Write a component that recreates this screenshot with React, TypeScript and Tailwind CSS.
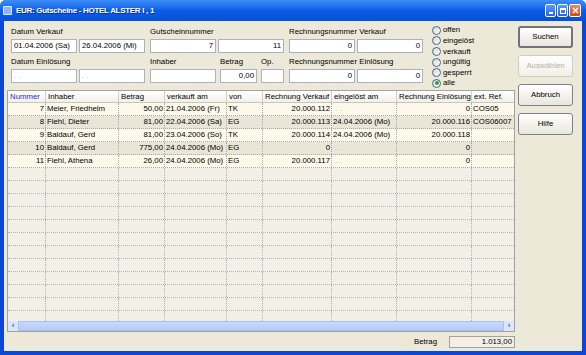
import React from "react"

type Col = { title: string; w: number; right?: boolean }

const cols: Col[] = [
  { title: "Nummer", w: 38, right: true },
  { title: "Inhaber", w: 73 },
  { title: "Betrag", w: 46, right: true },
  { title: "verkauft am", w: 62 },
  { title: "von", w: 36 },
  { title: "Rechnung Verkauf", w: 69, right: true },
  { title: "eingelöst am", w: 65 },
  { title: "Rechnung Einlösung", w: 75, right: true },
  { title: "ext. Ref.", w: 50 },
]

const rows = [
  ["7", "Meier, Friedhelm", "50,00", "21.04.2006 (Fr)", "TK", "20.000.112", ". .", "0", "COS05"],
  ["8", "Fiehl, Dieter", "81,00", "22.04.2006 (Sa)", "EG", "20.000.113", "24.04.2006 (Mo)", "20.000.116", "COS06007"],
  ["9", "Baldauf, Gerd", "81,00", "23.04.2006 (So)", "TK", "20.000.114", "24.04.2006 (Mo)", "20.000.118", ""],
  ["10", "Baldauf, Gerd", "775,00", "24.04.2006 (Mo)", "EG", "0", ". .", "0", ""],
  ["11", "Fiehl, Athena", "26,00", "24.04.2006 (Mo)", "EG", "20.000.117", ". .", "0", ""],
]

const radios = ["offen", "eingelöst", "verkauft", "ungültig", "gesperrt", "alle"]

function Field({ w, value = "", right, empty }: { w: number; value?: string; right?: boolean; empty?: boolean }) {
  return (
    <div
      className={`h-[14px] shrink-0 bg-white border border-[#a9b3bf] flex items-center px-[2px] ${right ? "justify-end" : ""} ${empty ? "text-[#b9b9b9]" : ""}`}
      style={{ width: w }}
    >
      {value}
    </div>
  )
}

function Label({ children }: { children: React.ReactNode }) {
  return <div className="h-[10px] leading-[10px] mb-[2px] whitespace-nowrap">{children}</div>
}

function Button({ label, disabled, main }: { label: string; disabled?: boolean; main?: boolean }) {
  return (
    <div
      className={`w-[55px] h-[22px] rounded-[3px] flex items-center justify-center bg-gradient-to-b from-white to-[#e8e6dc] ${
        disabled
          ? "border border-[#cfcdc0] text-[#b5b2a3] from-[#f7f6f0] to-[#f1efe6]"
          : main
          ? "border-2 border-[#6e7580]"
          : "border border-[#7d838c]"
      }`}
    >
      {label}
    </div>
  )
}

export default function App() {
  return (
    <div className="w-[586px] h-[355px] bg-[#0b47d4] rounded-t-[6px] flex flex-col overflow-hidden text-[7.8px] text-black font-['Liberation_Sans',Arial,sans-serif]">
      {/* title bar */}
      <div className="h-[21px] shrink-0 flex items-center bg-gradient-to-b from-[#3e8ff8] via-[#0b5ce9] to-[#0650d8] pl-[3px] pr-[5px]">
        <div className="w-[9px] h-[9px] bg-[#8fb6f2] border border-white/70 rounded-[1px]" />
        <div className="ml-[4px] text-white font-bold text-[8px] tracking-[-0.3px] [text-shadow:1px_1px_0_#0a2f8c]">
          EUR: Gutscheine - HOTEL ALSTER I , 1
        </div>
        <div className="ml-auto flex gap-[1px]">
          <div className="w-[11px] h-[13px] rounded-[2px] border border-white bg-gradient-to-b from-[#5d9bfb] to-[#2663e0] flex items-end justify-center pb-[2px]">
            <div className="w-[4px] h-[2px] bg-white" />
          </div>
          <div className="w-[11px] h-[13px] rounded-[2px] border border-white bg-gradient-to-b from-[#5d9bfb] to-[#2663e0] flex items-center justify-center">
            <div className="w-[6px] h-[6px] border border-white border-t-2" />
          </div>
          <div className="w-[12px] h-[13px] rounded-[2px] border border-white bg-gradient-to-b from-[#ef8a63] to-[#d2441c] flex items-center justify-center">
            <svg width="7" height="7" viewBox="0 0 7 7">
              <path d="M1 1L6 6M6 1L1 6" stroke="white" strokeWidth="1.6" />
            </svg>
          </div>
        </div>
      </div>

      {/* body */}
      <div className="flex-1 mx-[4px] mb-[4px] bg-[#ece9d8] flex">
        <div className="w-[511px] shrink-0 flex flex-col pl-[3px]">
          {/* form */}
          <div className="h-[69px] shrink-0 flex pl-[4px]">
            <div className="flex flex-col pt-[6px]">
              <div className="flex">
                <div>
                  <Label>Datum Verkauf</Label>
                  <div className="flex gap-[2px]">
                    <Field w={66} value="01.04.2006 (Sa)" />
                    <Field w={66} value="26.04.2006 (Mi)" />
                  </div>
                </div>
                <div className="ml-[5px]">
                  <Label>Gutscheinnummer</Label>
                  <div className="flex gap-[2px]">
                    <Field w={66} value="7" right />
                    <Field w={66} value="11" right />
                  </div>
                </div>
                <div className="ml-[5px]">
                  <Label>Rechnungsnummer Verkauf</Label>
                  <div className="flex gap-[2px]">
                    <Field w={66} value="0" right />
                    <Field w={66} value="0" right />
                  </div>
                </div>
              </div>
              <div className="flex mt-[4px]">
                <div>
                  <Label>Datum Einlösung</Label>
                  <div className="flex gap-[2px]">
                    <Field w={66} value=". ." empty />
                    <Field w={66} value=". ." empty />
                  </div>
                </div>
                <div className="ml-[5px]">
                  <Label>Inhaber</Label>
                  <Field w={66} />
                </div>
                <div className="ml-[4px]">
                  <Label>Betrag</Label>
                  <Field w={37} value="0,00" right />
                </div>
                <div className="ml-[4px]">
                  <Label>Op.</Label>
                  <Field w={23} />
                </div>
                <div className="ml-[5px]">
                  <Label>Rechnungsnummer Einlösung</Label>
                  <div className="flex gap-[2px]">
                    <Field w={66} value="0" right />
                    <Field w={66} value="0" right />
                  </div>
                </div>
              </div>
            </div>
            <div className="ml-[9px] pt-[4px] flex flex-col">
              {radios.map((r) => (
                <div key={r} className="h-[10.6px] flex items-center gap-[2px]">
                  <span className="w-[9px] h-[9px] rounded-full border border-[#3d6898] bg-gradient-to-br from-[#d8d6cc] to-white flex items-center justify-center">
                    {r === "alle" && <span className="w-[4px] h-[4px] rounded-full bg-[#2fa52c]" />}
                  </span>
                  <span className="leading-none">{r}</span>
                </div>
              ))}
            </div>
          </div>

          {/* grid */}
          <div className="w-[508px] h-[242px] shrink-0 border border-[#a3a29c] bg-[#f2f0e6] flex flex-col overflow-hidden">
            <div className="h-[12px] shrink-0 flex bg-gradient-to-b from-white to-[#f1f0ea] border-b border-[#c9c7bb]">
              {cols.map((c, i) => (
                <div
                  key={c.title}
                  className={`shrink-0 h-full flex items-center pl-[2px] border-r border-[#d3d0c3] whitespace-nowrap overflow-hidden ${
                    i === 0 ? "text-[#2b2bc4]" : ""
                  }`}
                  style={{ width: c.w }}
                >
                  {c.title}
                </div>
              ))}
            </div>
            <div className="flex-1 overflow-hidden">
              {rows.map((row, ri) => (
                <div
                  key={ri}
                  className={`h-[13px] flex border-b border-dotted border-[#a9a9a9] ${ri % 2 === 0 ? "bg-[#fcf9eb]" : "bg-[#e9e6d8]"}`}
                >
                  {cols.map((c, ci) => (
                    <div
                      key={ci}
                      className={`shrink-0 h-full flex items-center px-[1px] border-r border-dotted border-[#a9a9a9] whitespace-nowrap overflow-hidden ${
                        c.right ? "justify-end" : ""
                      } ${row[ci] === ". ." ? "text-[#b0b0b0] pl-[3px]" : ""}`}
                      style={{ width: c.w }}
                    >
                      {row[ci]}
                    </div>
                  ))}
                </div>
              ))}
              {Array.from({ length: 13 }).map((_, ri) => (
                <div key={"e" + ri} className="h-[13px] flex border-b border-dotted border-[#b3b3b3]">
                  {cols.map((c, ci) => (
                    <div key={ci} className="shrink-0 h-full border-r border-dotted border-[#b3b3b3]" style={{ width: c.w }} />
                  ))}
                </div>
              ))}
            </div>
            <div className="h-[10px] shrink-0 flex bg-[#c2d4fb]">
              <div className="w-[10px] flex items-center justify-center bg-[#dbe6fd] text-[#3257b4] text-[8px] font-bold leading-none">‹</div>
              <div className="flex-1 bg-gradient-to-b from-[#cad9fc] to-[#b6cbf8] border border-[#a9c0f3]" />
              <div className="w-[10px] flex items-center justify-center bg-[#dbe6fd] text-[#3257b4] text-[8px] font-bold leading-none">›</div>
            </div>
          </div>

          {/* footer */}
          <div className="flex-1 flex justify-end items-start pt-[4px]">
            <div className="h-[12px] flex items-center mr-[12px]">Betrag</div>
            <div className="w-[66px] h-[12px] border border-[#a4a294] bg-[#f1efe6] flex items-center justify-end pr-[2px]">
              1.013,00
            </div>
          </div>
        </div>

        {/* buttons */}
        <div className="flex-1 pl-[3px] pt-[5px] flex flex-col gap-[7px]">
          <Button label="Suchen" main />
          <Button label="Auswählen" disabled />
          <Button label="Abbruch" />
          <Button label="Hilfe" />
        </div>
      </div>
    </div>
  )
}
